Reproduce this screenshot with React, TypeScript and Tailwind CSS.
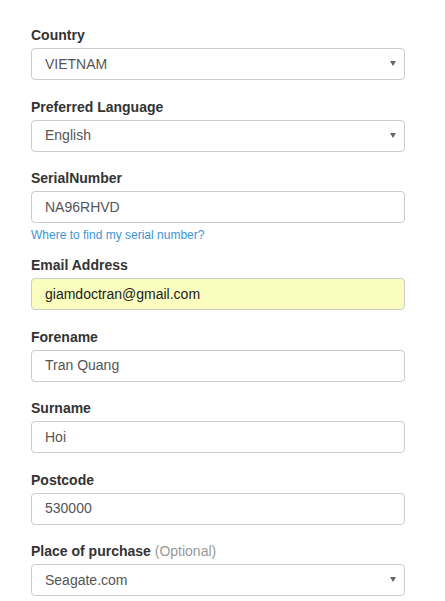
const fields = [
  { label: 'Country', value: 'VIETNAM', select: true },
  { label: 'Preferred Language', value: 'English', select: true },
  { label: 'SerialNumber', value: 'NA96RHVD', help: 'Where to find my serial number?' },
  { label: 'Email Address', value: 'giamdoctran@gmail.com', autofill: true },
  { label: 'Forename', value: 'Tran Quang' },
  { label: 'Surname', value: 'Hoi' },
  { label: 'Postcode', value: '530000' },
  { label: 'Place of purchase', value: 'Seagate.com', select: true, optional: true },
];

export default function App() {
  return (
    <div className="w-[445px] h-[601px] bg-white overflow-hidden pt-[23px] pl-[31px] font-['Liberation_Sans',Arial,sans-serif] text-[#333]">
      <div className="w-[374px]">
        {fields.map((f, index) => (
          <div key={index} className="mb-[14.5px]">
            <div className="text-[14px] leading-[20px] font-bold pt-[2px] mb-[3px]">
              {f.label}
              {f.optional && <span className="font-normal text-[#999]"> (Optional)</span>}
            </div>
            <div
              className={
                f.autofill
                  ? 'h-[32px] border border-[#ccc] rounded-[4px] bg-[#fafdbd] flex items-center pl-[13px] pr-[8px] text-[14px] text-[#222]'
                  : 'h-[32px] border border-[#ccc] rounded-[4px] bg-white flex items-center pl-[13px] pr-[8px] text-[14px] text-[#555]'
              }
            >
              <span className="flex-1">{f.value}</span>
              {f.select && (
                <svg width="6" height="5" viewBox="0 0 6 5" className="mb-[1px]">
                  <path d="M0 0h6L3 5z" fill="#666" />
                </svg>
              )}
            </div>
            {f.help && (
              <div className="text-[12px] leading-[17px] text-[#3d95d4] mt-[4px] -mb-[5.5px]">{f.help}</div>
            )}
          </div>
        ))}
      </div>
    </div>
  );
}
